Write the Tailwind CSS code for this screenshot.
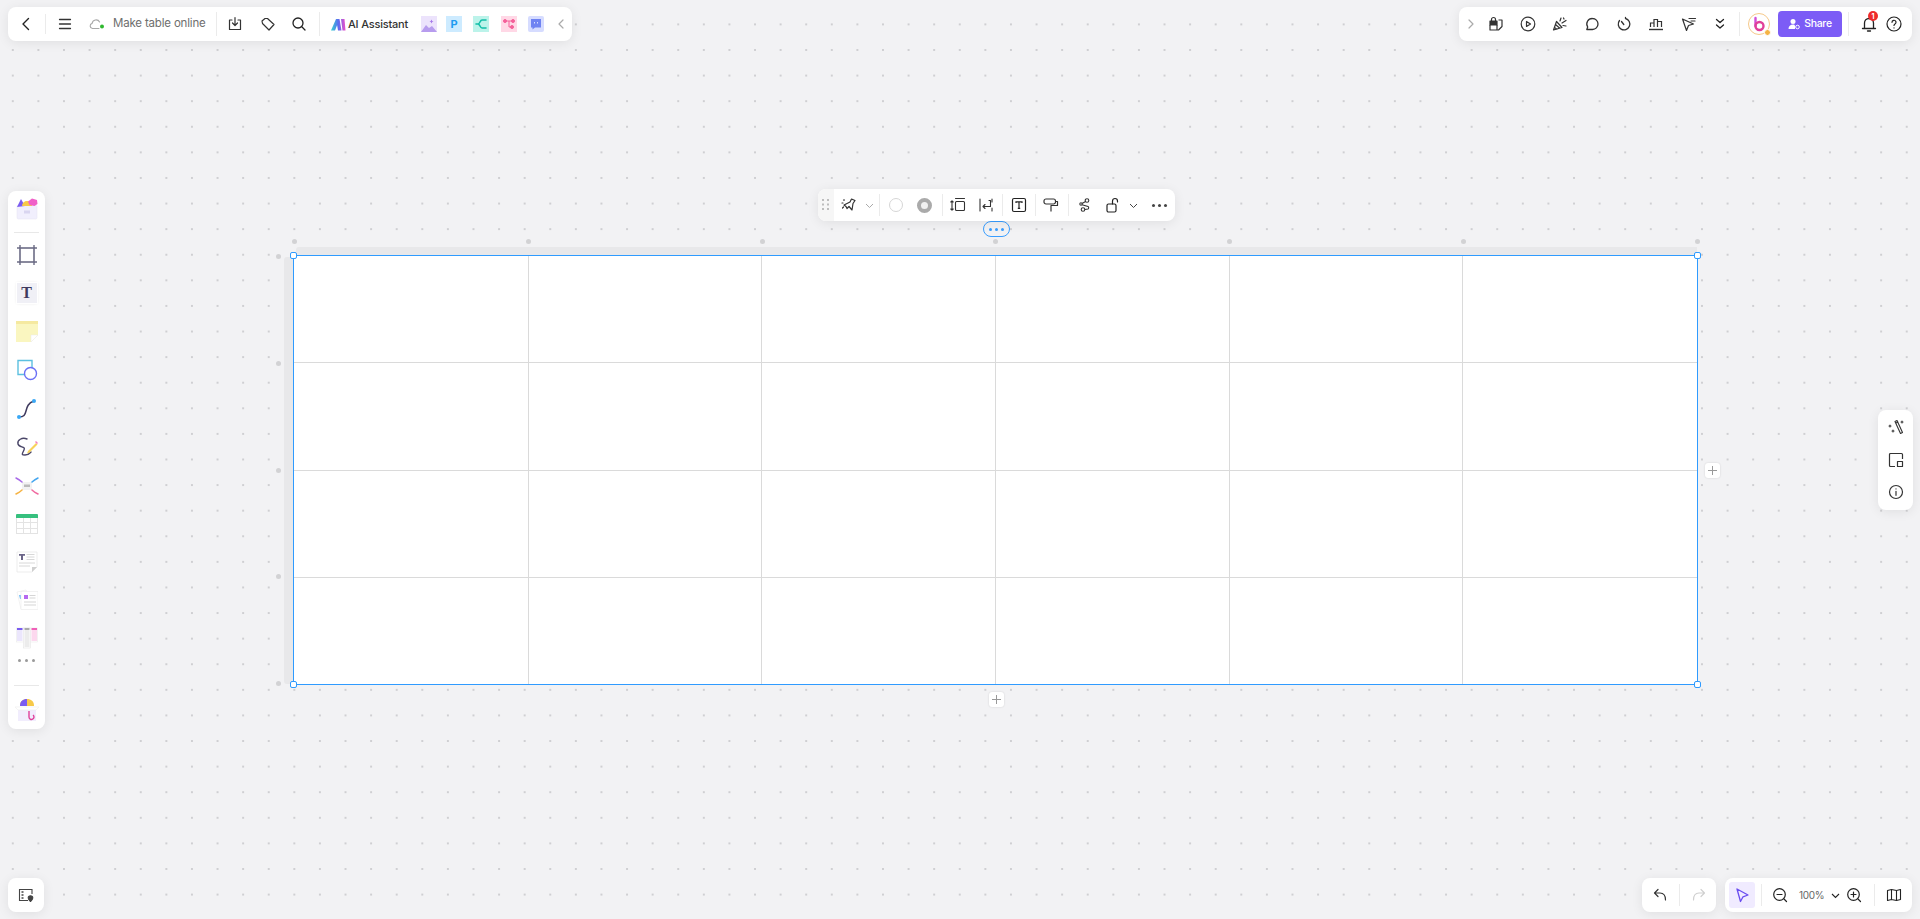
<!DOCTYPE html>
<html lang="en">
<head>
    <meta charset="UTF-8">
    <meta name="viewport" content="width=device-width, initial-scale=1.0">
    <title>Make table online</title>
    <script src="https://cdn.jsdelivr.net/npm/@tailwindcss/browser@4"></script>
</head>
<body class="bg-[#f2f2f4] font-['Inter','Liberation_Sans',sans-serif] overflow-hidden">
<div class="relative w-[1920px] h-[919px] overflow-hidden bg-[radial-gradient(circle,#cfcfd2_1.1px,transparent_1.3px)] bg-size-[25.6px_25.6px] bg-position-[0px_11.6px]">

    <!-- Top left bar -->
    <div class="absolute left-[8px] top-[7px] w-[564px] h-[34px] flex items-center bg-white rounded-lg shadow-[0_2px_12px_rgba(0,0,0,0.08)]">
        <div class="w-[35px] flex justify-center"><svg width="16" height="16" viewBox="0 0 16 16" fill="none" stroke="#222" stroke-width="1.4" stroke-linecap="round" stroke-linejoin="round"><path d="M10.5 2.5 5 8l5.5 5.5"/></svg></div>
        <div class="ml-[2px] w-px h-[20px] bg-[#ebebeb]"></div>
        <div class="w-[38px] flex justify-center"><svg width="16" height="16" viewBox="0 0 16 16" fill="none" stroke="#333" stroke-width="1.3" stroke-linecap="round"><path d="M2.5 3.5h11M2.5 8h11M2.5 12.5h11"/></svg></div>
        <svg class="ml-[5px]" width="16" height="16" viewBox="0 0 16 16" fill="none"><path d="M6 12.5H3.5a2.6 2.6 0 0 1-.4-5.1A4 4 0 0 1 10.6 6M6 12.5h4" stroke="#a8a8a8" stroke-width="1.1" stroke-linecap="round"/><circle cx="13" cy="10.5" r="2" fill="#2fb82f"/></svg>
        <span class="ml-[8px] w-[93px] text-[11.5px] tracking-[-0.18px] leading-none text-[#6e6e6e] whitespace-nowrap">Make table online</span>
        <div class="ml-[10px] w-px h-[24px] bg-[#ebebeb]"></div>
        <div class="w-[36px] flex justify-center"><svg width="16" height="16" viewBox="0 0 16 16" fill="none" stroke="#333" stroke-width="1.2" stroke-linecap="round" stroke-linejoin="round"><path d="M5 4H2.500v9.500h11V4H11M8 1.500V9.500M5.500 7 8 9.500 10.500 7"/></svg></div>
        <div class="w-[30px] flex justify-center"><svg width="16" height="16" viewBox="0 0 16 16" fill="none" stroke="#333" stroke-width="1.2" stroke-linejoin="round"><path d="M2 5 5 2.500h2.500L14 8.500 9 14 2.500 7.500z"/></svg></div>
        <div class="w-[32px] flex justify-center"><svg width="16" height="16" viewBox="0 0 16 16" fill="none" stroke="#222" stroke-width="1.3" stroke-linecap="round"><circle cx="7" cy="7" r="5"/><path d="m10.800 10.800 3.200 3.200"/></svg></div>
        <div class="ml-[4px] w-px h-[24px] bg-[#ebebeb]"></div>
        <svg class="ml-[11px]" width="15" height="13" viewBox="0 0 15 13"><defs><linearGradient id="ai" x1="0" y1="0" x2="1" y2="0"><stop offset="0" stop-color="#35d6d0"/><stop offset=".5" stop-color="#5a6cf0"/><stop offset="1" stop-color="#f04fc8"/></linearGradient></defs><path d="M0 12.500 5 1h3.500L4 12.500zM5 1h3.500l2 11.500H7zM10 1h3.500l1 11.500H11.500z" fill="url(#ai)"/></svg>
        <span class="ml-[2px] w-[62px] text-[11px] tracking-[-0.2px] leading-none font-medium text-[#333] whitespace-nowrap">AI Assistant</span>
        <div class="ml-[11px] w-[16px] h-[16px] bg-[#ece3fc] relative overflow-hidden"><svg width="16" height="16" viewBox="0 0 16 16"><path d="M0 16 5 9l3 3 3-2 5 6z" fill="#b79cee"/><path d="M10.500 3.500 11.200 5l1.300.5-1.300.5-.7 1.500L9.800 6l-1.300-.5 1.300-.5z" fill="#a678e8"/></svg></div>
        <div class="ml-[9px] w-[16px] h-[16px] bg-[#cdebff] flex items-center justify-center text-[11px] leading-none font-bold text-[#1f9bf0]">P</div>
        <div class="ml-[11px] w-[16px] h-[16px] bg-[#bcf3ea]"><svg width="16" height="16" viewBox="0 0 16 16" fill="none" stroke="#10bfa8" stroke-width="1.6" stroke-linecap="round"><path d="M13 4H9C7 4 7 8 5 8s-2 0-2 0M5 8c2 0 2 4 4 4h4"/></svg></div>
        <div class="ml-[12px] w-[16px] h-[16px] bg-[#ffd8e6]"><svg width="16" height="16" viewBox="0 0 16 16" fill="none" stroke="#f5609a" stroke-width="1"><path d="M4 5h8M8 5v6h3"/><circle cx="4" cy="5" r="1.500" fill="#f5609a"/><circle cx="12" cy="5" r="1.500" fill="#f5609a"/><circle cx="11" cy="11" r="1.500" fill="#f5609a"/></svg></div>
        <div class="ml-[11px] w-[16px] h-[16px] bg-[#d6dcff] rounded-[2px]"><svg width="16" height="16" viewBox="0 0 16 16"><path d="M3 3h10v8.500H7L4.500 13.500V11.500H3z" fill="#6f83f2"/><path d="M6.500 6v1.500M9.500 6v1.500" stroke="#d6dcff" stroke-width="1"/></svg></div>
        <div class="ml-[9px] w-[16px] flex justify-center"><svg width="12" height="12" viewBox="0 0 12 12" fill="none" stroke="#aaa" stroke-width="1.200" stroke-linecap="round" stroke-linejoin="round"><path d="M8 2 4 6l4 4"/></svg></div>
    </div>

    <!-- Top right bar -->
    <div class="absolute left-[1459px] top-[7px] w-[453px] h-[34px] flex items-center bg-white rounded-lg shadow-[0_2px_12px_rgba(0,0,0,0.08)]">
        <div class="ml-[6px] w-[12px] flex justify-center"><svg width="12" height="12" viewBox="0 0 12 12" fill="none" stroke="#aaa" stroke-width="1.200" stroke-linecap="round" stroke-linejoin="round"><path d="m4 2 4 4-4 4"/></svg></div>
        <div class="ml-[3px] w-[32px] flex justify-center"><svg width="16" height="16" viewBox="0 0 16 16" fill="none" stroke="#333" stroke-width="1.200" stroke-linejoin="round"><rect x="2" y="5" width="7" height="4" fill="#333"/><path d="M2 9v5h7V9M3.500 5V3.500a2 2 0 0 1 4 0V5M10.500 4h3.500v6.500L10.500 14H9"/></svg></div>
        <div class="w-[32px] flex justify-center"><svg width="16" height="16" viewBox="0 0 16 16" fill="none" stroke="#333" stroke-width="1.200" stroke-linejoin="round"><circle cx="8" cy="8" r="6.800"/><path d="M6.500 5.500v5L10.500 8z"/></svg></div>
        <div class="w-[32px] flex justify-center"><svg width="16" height="16" viewBox="0 0 16 16" fill="none" stroke="#333" stroke-width="1.200" stroke-linecap="round" stroke-linejoin="round"><path d="M4.500 5.500 1.500 14 10 11.500zM3.500 8.500l4 3.500M2.500 11.500l2.500 1.700M8 5l1-3M10 7l4-2.500M11 9.500l3 .5M11.500 2l.5 1"/></svg></div>
        <div class="w-[32px] flex justify-center"><svg width="16" height="16" viewBox="0 0 16 16" fill="none" stroke="#333" stroke-width="1.300" stroke-linejoin="round"><path d="M8.500 2.500a5.500 5.500 0 0 1 0 11H2.800l.9-2.500A5.500 5.500 0 0 1 8.500 2.500z"/></svg></div>
        <div class="w-[32px] flex justify-center"><svg width="16" height="16" viewBox="0 0 16 16" fill="none" stroke="#333" stroke-width="1.300" stroke-linecap="round"><path d="M9.500 2.500A5.800 5.800 0 1 1 3.500 4.500M9.500 2.500v-1M7.800 8.500 5.500 5.500"/></svg></div>
        <div class="w-[32px] flex justify-center"><svg width="16" height="16" viewBox="0 0 16 16" fill="none" stroke="#333" stroke-width="1.200"><path d="M2.500 11V7h3.500v4M6 11V3.500h3.500V11M9.500 11V5.500h4V11"/><path d="M1 13.500h14" stroke-width="1.400"/></svg></div>
        <div class="w-[33px] flex justify-center"><svg width="16" height="16" viewBox="0 0 16 16" fill="none" stroke="#333" stroke-width="1.200" stroke-linejoin="round" stroke-linecap="round"><path d="M1.500 3 5.500 14.500l2-5 5-1.500zM8 2.500h6.500M10 5h4"/></svg></div>
        <div class="w-[30px] flex justify-center"><svg width="14" height="14" viewBox="0 0 14 14" fill="none" stroke="#222" stroke-width="1.300" stroke-linecap="round" stroke-linejoin="round"><path d="m3.500 2.500 3.500 3 3.500-3M3.500 8l3.500 3 3.500-3"/></svg></div>
        <div class="ml-[4px] w-px h-[24px] bg-[#ebebeb]"></div>
        <div class="relative ml-[8px] w-[22px] h-[22px] rounded-full bg-white border border-[#f6c98a] flex items-center justify-center">
            <svg width="14" height="16" viewBox="0 0 14 16" fill="none" stroke-width="2.400" stroke-linecap="round"><path d="M3.500 2v8" stroke="#d14fd8"/><circle cx="7.500" cy="10" r="4" stroke="#e0409a"/></svg>
            <span class="absolute right-[-2px] bottom-[-2px] w-[7px] h-[7px] rounded-full bg-[#f5b344] border border-white"></span>
        </div>
        <div class="ml-[8px] w-[64px] h-[26px] rounded-[4px] bg-[#7c5cf6] flex items-center justify-center gap-[4px]">
            <svg width="12" height="12" viewBox="0 0 12 12" fill="#fff"><circle cx="5" cy="3.500" r="2.500"/><path d="M0.500 11c0-3 2-4.500 4.500-4.500S7 8 7 11z"/><circle cx="9.500" cy="9" r="1.800" fill="none" stroke="#fff" stroke-width="1"/></svg>
            <span class="text-[10.5px] tracking-[-0.3px] leading-none font-medium text-white">Share</span>
        </div>
        <div class="ml-[6px] w-px h-[24px] bg-[#ebebeb]"></div>
        <div class="relative ml-[12px] w-[16px] h-[16px]">
            <svg width="16" height="16" viewBox="0 0 16 16" fill="none" stroke="#222" stroke-width="1.300" stroke-linecap="round" stroke-linejoin="round"><path d="M3.500 12V7a4.500 4.500 0 0 1 9 0v5M1.500 12.500h13M6.500 15h3"/></svg>
            <span class="absolute left-[7px] top-[-5px] w-[10px] h-[10px] rounded-full bg-[#ee2b2b] flex items-center justify-center text-[7px] leading-none font-bold text-white">1</span>
        </div>
        <svg class="ml-[9px]" width="16" height="16" viewBox="0 0 16 16" fill="none" stroke="#222" stroke-width="1.200" stroke-linecap="round"><circle cx="8" cy="8" r="7"/><path d="M6 6.300a2 2 0 1 1 3 1.700c-.7.400-1 .8-1 1.500M8 11.800v.2"/></svg>
    </div>

    <!-- Left tools -->
    <div class="absolute left-[8px] top-[191px] w-[37px] h-[538px] flex flex-col items-center bg-white rounded-lg shadow-[0_2px_12px_rgba(0,0,0,0.08)]">
        <svg class="mt-[7px] shrink-0" width="22" height="22" viewBox="0 0 22 22"><rect x="1" y="7" width="20" height="14" rx="1.500" fill="#f1effd" stroke="#e5e3f2" stroke-width=".5"/><path d="M1 9 5 1l4 7z" fill="#7b5cf0"/><path d="M6 8a5 5 0 0 1 10 0z" fill="#f7c948"/><path d="M12 3.500 16 0.500l5 1.500.5 4-3 2-5-1z" fill="#f060c8"/><rect x="8" y="12.500" width="6" height="3" fill="#d9d5f0"/></svg>
        <div class="mt-[12px] w-[25px] h-px bg-[#e8e8e8]"></div>
        <svg class="mt-[11px] shrink-0" width="22" height="22" viewBox="0 0 22 22" fill="none" stroke="#6c6c85" stroke-width="1.400"><rect x="4" y="4" width="14" height="14" stroke-width="1.600"/><path d="M1 4h3M18 4h3M1 18h3M18 18h3M4 1v3M18 1v3M4 18v3M18 18v3"/></svg>
        <div class="mt-[17px] relative w-[20px] h-[20px] bg-[#f0f0f6] flex items-center justify-center text-[16px] leading-none font-bold font-['Liberation_Serif',serif] text-[#3f3a5e] shadow-[0_0_0_1px_#fff,0_0_3px_rgba(0,0,0,0.15)]">T</div>
        <svg class="mt-[17px] shrink-0" width="22" height="22" viewBox="0 0 22 22"><path d="M0 1h22v14l-7 7H0z" fill="#faf6c0"/><rect width="22" height="3" y="1" fill="#f5e9a0"/><path d="M15 22v-7h7z" fill="#fff" stroke="#e8e8e8" stroke-width=".5"/></svg>
        <svg class="mt-[17px] shrink-0" width="22" height="22" viewBox="0 0 22 22" fill="none"><path d="M2 1.500h14v14H2z" fill="#fff" stroke="#5cc0e0" stroke-width="1.400"/><circle cx="14.500" cy="14.500" r="6" fill="#fff" stroke="#6a70f5" stroke-width="1.400"/></svg>
        <svg class="mt-[17px] shrink-0" width="22" height="22" viewBox="0 0 22 22" fill="none"><path d="M3 19c5 0 6-2 7-6s2-8 8-10" stroke="#3f3a5e" stroke-width="1.500"/><circle cx="3" cy="19" r="2" fill="#3aa8f5"/><circle cx="18" cy="3" r="2" fill="#3aa8f5"/></svg>
        <svg class="mt-[16px] shrink-0" width="22" height="22" viewBox="0 0 22 22" fill="none"><path d="M11 3C6 1 1 4 2 8s8 2 6 6-3 5 1 5 5-2 6-3" stroke="#4a4668" stroke-width="1.400" stroke-linecap="round"/><path d="m12 15 8-8 1.500 1.500-8 8-2.500 1z" fill="#f7d25a"/><path d="m19 6 1-1 2 2-1 1z" fill="#f57fc0"/></svg>
        <svg class="mt-[18px] shrink-0" width="24" height="20" viewBox="0 0 24 20" fill="none" stroke-width="1.500" stroke-linecap="round"><rect x="7" y="6" width="10" height="8" fill="#f2f2f2"/><rect x="9" y="8.500" width="6" height="2.500" fill="#bbb"/><path d="M7 6C5 4 3 3 1 2" stroke="#a86ae8"/><path d="M17 6c2-2 4-3 6-4" stroke="#45a6ef"/><path d="M7 14c-2 2-4 3-6 4" stroke="#f5b344"/><path d="M17 14c2 2 4 3 6 4" stroke="#f06aa0"/></svg>
        <div class="mt-[18px] w-[22px] h-[20px] grid grid-cols-3 grid-rows-3 gap-px p-px pt-0 bg-[#e3e3e3] border-t-[4px] border-[#36c07e] rounded-t-[1px]">
            <span class="bg-white"></span><span class="bg-white"></span><span class="bg-white"></span>
            <span class="bg-white"></span><span class="bg-white"></span><span class="bg-white"></span>
            <span class="bg-white"></span><span class="bg-white"></span><span class="bg-white"></span>
        </div>
        <svg class="mt-[17px] shrink-0" width="22" height="22" viewBox="0 0 22 22"><path d="M1 1h20v15l-5 5H1z" fill="#fff" stroke="#e8e8e8" stroke-width=".8"/><path d="M3 3h6v1.800H7V9H5V4.800H3z" fill="#6b6588"/><path d="M10.500 3.500h8M10.500 6h8M10.500 8.500h8M3 12h16M3 15h11" stroke="#d8d8d8" stroke-width="1"/><path d="M16 21v-5h5z" fill="#cfcfcf"/></svg>
        <svg class="mt-[16px] shrink-0" width="22" height="22" viewBox="0 0 22 22"><path d="M1 3 10 1l2 4v14L5 20z" fill="#fff" stroke="#eaeaea" stroke-width=".6"/><path d="M3 6h2v4H4z" fill="#72bdf5"/><rect x="5" y="2.500" width="17" height="18" fill="#fff" stroke="#eaeaea" stroke-width=".6"/><rect x="8" y="6" width="4" height="4" fill="#b66af0"/><path d="M13.500 6.500h6M13.500 9h6M8 13h12M8 16h12" stroke="#d5d5d5" stroke-width="1"/></svg>
        <svg class="mt-[16px] shrink-0" width="22" height="22" viewBox="0 0 22 22"><rect x="0.500" y="1" width="21" height="14" fill="#fff" stroke="#eaeaea" stroke-width=".6"/><rect x="1" y="2" width="5.500" height="12" fill="#ebe6fc"/><rect x="15.500" y="2" width="5.500" height="12" fill="#fcd8ee"/><rect x="1" y="1" width="5.500" height="2" fill="#7b5cf0"/><rect x="15.500" y="1" width="5.500" height="2" fill="#f060b8"/><rect x="7.500" y="1" width="7" height="20" fill="#fff" stroke="#e5e5e5" stroke-width=".6"/><rect x="8.500" y="1" width="5" height="2" fill="#aaa"/><rect x="8.500" y="3" width="5" height="17" fill="#ececec"/></svg>
        <div class="mt-[10px] flex gap-[4px]"><span class="w-[3px] h-[3px] rounded-full bg-[#9a9a9a]"></span><span class="w-[3px] h-[3px] rounded-full bg-[#9a9a9a]"></span><span class="w-[3px] h-[3px] rounded-full bg-[#9a9a9a]"></span></div>
        <div class="mt-[23px] w-[25px] h-px bg-[#e8e8e8]"></div>
        <svg class="mt-[12px] shrink-0" width="26" height="24" viewBox="0 0 26 24"><path d="M6 8C6 3 9 1 13 1s7 2 7 7z" fill="#f7c948"/><path d="M6 8C6 3 9 1 13 1v7z" fill="#7b5cf0"/><path d="M4 9h18v14H4z" fill="#f1edfd"/><path d="M1 9h24l-3 3H4z" fill="#fff" stroke="#ececec" stroke-width=".6"/><path d="M15 13v6M15 19a2.500 2.500 0 1 0 4-2" fill="none" stroke="#e0409a" stroke-width="1.400"/></svg>
    </div>

    <!-- Table selection -->
    <div class="absolute left-[292px] top-[238.500px] w-[1408px] flex justify-between">
        <span class="w-[5px] h-[5px] rounded-full bg-[#d2d2d4]"></span><span class="w-[5px] h-[5px] rounded-full bg-[#d2d2d4]"></span><span class="w-[5px] h-[5px] rounded-full bg-[#d2d2d4]"></span><span class="w-[5px] h-[5px] rounded-full bg-[#d2d2d4]"></span><span class="w-[5px] h-[5px] rounded-full bg-[#d2d2d4]"></span><span class="w-[5px] h-[5px] rounded-full bg-[#d2d2d4]"></span><span class="w-[5px] h-[5px] rounded-full bg-[#d2d2d4]"></span>
    </div>
    <div class="absolute left-[276px] top-[254px] h-[432px] flex flex-col justify-between">
        <span class="w-[5px] h-[5px] rounded-full bg-[#d2d2d4]"></span><span class="w-[5px] h-[5px] rounded-full bg-[#d2d2d4]"></span><span class="w-[5px] h-[5px] rounded-full bg-[#d2d2d4]"></span><span class="w-[5px] h-[5px] rounded-full bg-[#d2d2d4]"></span><span class="w-[5px] h-[5px] rounded-full bg-[#d2d2d4]"></span>
    </div>
    <div class="absolute left-[296px] top-[247px] w-[1401px] h-[8px] bg-[#e8e8ea] rounded-tl-[3px]"></div>
    <div class="absolute left-[284px] top-[257px] w-[9px] h-[427px] bg-[#e8e8ea] rounded-l-[3px]"></div>

    <div class="absolute left-[293px] top-[255px] w-[1405px] h-[430px] grid grid-cols-[234.5px_233.5px_233.5px_234px_233.5px_1fr] grid-rows-[106.5px_108px_107px_1fr] bg-white border-[1.500px] border-[#2f9bff]">
        <div class="border-r border-b border-[#dadada]"></div><div class="border-r border-b border-[#dadada]"></div><div class="border-r border-b border-[#dadada]"></div><div class="border-r border-b border-[#dadada]"></div><div class="border-r border-b border-[#dadada]"></div><div class="border-b border-[#dadada]"></div>
        <div class="border-r border-b border-[#dadada]"></div><div class="border-r border-b border-[#dadada]"></div><div class="border-r border-b border-[#dadada]"></div><div class="border-r border-b border-[#dadada]"></div><div class="border-r border-b border-[#dadada]"></div><div class="border-b border-[#dadada]"></div>
        <div class="border-r border-b border-[#dadada]"></div><div class="border-r border-b border-[#dadada]"></div><div class="border-r border-b border-[#dadada]"></div><div class="border-r border-b border-[#dadada]"></div><div class="border-r border-b border-[#dadada]"></div><div class="border-b border-[#dadada]"></div>
        <div class="border-r border-[#dadada]"></div><div class="border-r border-[#dadada]"></div><div class="border-r border-[#dadada]"></div><div class="border-r border-[#dadada]"></div><div class="border-r border-[#dadada]"></div><div></div>
    </div>
    <span class="absolute left-[290px] top-[252px] w-[7px] h-[7px] rounded-[2px] bg-white border border-[#2f9bff]"></span>
    <span class="absolute left-[1694px] top-[252px] w-[7px] h-[7px] rounded-[2px] bg-white border border-[#2f9bff]"></span>
    <span class="absolute left-[290px] top-[681px] w-[7px] h-[7px] rounded-[2px] bg-white border border-[#2f9bff]"></span>
    <span class="absolute left-[1694px] top-[681px] w-[7px] h-[7px] rounded-[2px] bg-white border border-[#2f9bff]"></span>

    <!-- Add row / column -->
    <div class="absolute left-[1705px] top-[463px] w-[15px] h-[15px] rounded-[3px] bg-white flex items-center justify-center shadow-[0_0_2px_rgba(0,0,0,0.15)]"><svg width="11" height="11" viewBox="0 0 11 11" stroke="#999" stroke-width="1"><path d="M5.500 1v9M1 5.500h9"/></svg></div>
    <div class="absolute left-[989px] top-[692px] w-[15px] h-[15px] rounded-[3px] bg-white flex items-center justify-center shadow-[0_0_2px_rgba(0,0,0,0.15)]"><svg width="11" height="11" viewBox="0 0 11 11" stroke="#999" stroke-width="1"><path d="M5.500 1v9M1 5.500h9"/></svg></div>

    <!-- More pill under the toolbar -->
    <div class="absolute left-[983px] top-[221px] w-[27px] h-[16px] rounded-full bg-[#f2f2f4] border border-[#3a9eff] flex items-center justify-center gap-[3px]">
        <span class="w-[3px] h-[3px] rounded-full bg-[#3a9eff]"></span><span class="w-[3px] h-[3px] rounded-full bg-[#3a9eff]"></span><span class="w-[3px] h-[3px] rounded-full bg-[#3a9eff]"></span>
    </div>

    <!-- Floating table toolbar -->
    <div class="absolute left-[818px] top-[189px] w-[357px] h-[32px] flex items-center bg-white rounded-lg shadow-[0_2px_12px_rgba(0,0,0,0.08)] overflow-hidden">
        <div class="w-[16px] h-full bg-[#f6f6f6] flex items-center justify-center"><svg width="8" height="12" viewBox="0 0 8 12" fill="#bdbdbd"><rect x="0" y="0" width="2" height="2"/><rect x="5" y="0" width="2" height="2"/><rect x="0" y="4.500" width="2" height="2"/><rect x="5" y="4.500" width="2" height="2"/><rect x="0" y="9" width="2" height="2"/><rect x="5" y="9" width="2" height="2"/></svg></div>
        <div class="w-[30px] flex justify-center"><svg width="16" height="16" viewBox="0 0 16 16" fill="none" stroke="#333" stroke-width="1.200" stroke-linejoin="round" stroke-linecap="round"><path d="M3 8 9 5l1.500-3L14 3.500l-2 3-1 6.500-3-3.500-2 2-1-2zM1 6h1M3 2.500v1M1.500 11l1-1"/></svg></div>
        <div class="w-[10px] flex justify-center"><svg width="9" height="9" viewBox="0 0 9 9" fill="none" stroke="#aaa" stroke-width="1"><path d="m1 3 3.500 3.500L8 3"/></svg></div>
        <div class="ml-[5px] w-px h-[22px] bg-[#ebebeb]"></div>
        <div class="ml-[9px] w-[14px] h-[14px] rounded-full bg-white border border-[#d5d5d5]"></div>
        <div class="ml-[14px] w-[15px] h-[15px] rounded-full border-[4px] border-[#aaaaaa] bg-[#f0f0f0]"></div>
        <div class="ml-[10px] w-px h-[22px] bg-[#ebebeb]"></div>
        <div class="ml-[7px] w-[16px] flex justify-center"><svg width="16" height="16" viewBox="0 0 16 16" fill="none" stroke="#333" stroke-width="1.100" stroke-linecap="round" stroke-linejoin="round"><rect x="5.500" y="4.500" width="9" height="9" rx="1"/><path d="M5.500 1.500h9M2 4v9M.8 5 2 3.800 3.200 5M.8 12 2 13.200 3.200 12"/></svg></div>
        <div class="ml-[12px] w-[16px] flex justify-center"><svg width="16" height="16" viewBox="0 0 16 16" fill="none" stroke="#333" stroke-width="1.100" stroke-linecap="round" stroke-linejoin="round"><path d="M2 2v12M14 2v3M14 11v3M11 3.500h1.500v6H5M7 7.500 5 9.500l2 2"/></svg></div>
        <div class="ml-[8px] w-px h-[22px] bg-[#ebebeb]"></div>
        <div class="ml-[8px] w-[16px] flex justify-center"><svg width="16" height="16" viewBox="0 0 16 16" fill="none" stroke="#222" stroke-width="1.200"><rect x="1.500" y="1.500" width="13" height="13" rx="1.500"/><path d="M5 6V4.800h6V6M8 4.800v6.500M6.800 11.300h2.400"/></svg></div>
        <div class="ml-[8px] w-px h-[22px] bg-[#ebebeb]"></div>
        <div class="ml-[7px] w-[16px] flex justify-center"><svg width="16" height="16" viewBox="0 0 16 16" fill="none" stroke="#333" stroke-width="1.200" stroke-linejoin="round"><rect x="1" y="2" width="11.500" height="5" rx="2"/><path d="M12.500 4.500h2v4H8v3M8 11.500v3"/></svg></div>
        <div class="ml-[9px] w-px h-[22px] bg-[#ebebeb]"></div>
        <div class="ml-[8px] w-[16px] flex justify-center"><svg width="16" height="16" viewBox="0 0 16 16" fill="none" stroke="#333" stroke-width="1.100"><circle cx="10" cy="3.500" r="1.800"/><circle cx="6" cy="12.500" r="1.800"/><circle cx="4" cy="7" r="1.200"/><path d="M8.500 4.500 5 6.500M5 7.800l6 1.700a1.500 1.500 0 0 1 0 2.500L7.800 12.500"/></svg></div>
        <div class="ml-[12px] w-[16px] flex justify-center"><svg width="16" height="16" viewBox="0 0 16 16" fill="none" stroke="#222" stroke-width="1.200" stroke-linecap="round"><rect x="2" y="7" width="9" height="8" rx="1.500"/><path d="M7.500 7V4a2.500 2.500 0 0 1 5 0v1"/></svg></div>
        <div class="ml-[7px] w-[10px] flex justify-center"><svg width="9" height="9" viewBox="0 0 9 9" fill="none" stroke="#444" stroke-width="1"><path d="m1 3 3.500 3.500L8 3"/></svg></div>
        <div class="ml-[14px] flex gap-[3px]"><span class="w-[3px] h-[3px] rounded-full bg-[#444]"></span><span class="w-[3px] h-[3px] rounded-full bg-[#444]"></span><span class="w-[3px] h-[3px] rounded-full bg-[#444]"></span></div>
    </div>

    <!-- Right tools -->
    <div class="absolute left-[1878px] top-[410px] w-[35px] h-[100px] flex flex-col items-center justify-center gap-[16px] bg-white rounded-lg shadow-[0_2px_12px_rgba(0,0,0,0.08)]">
        <svg width="16" height="16" viewBox="0 0 16 16" fill="none" stroke="#333" stroke-width="1.100" stroke-linecap="round" stroke-linejoin="round"><path d="m7 1.500 2-1 5.500 12-2 1zM8 3l2-1M1 6h2M2 5v2M13 2h2M14 1v2M4 11h2M5 10v2"/></svg>
        <svg width="16" height="16" viewBox="0 0 16 16" fill="none" stroke="#333" stroke-width="1.200" stroke-linejoin="round"><path d="M7 14.500H2.500a1 1 0 0 1-1-1v-11a1 1 0 0 1 1-1h11a1 1 0 0 1 1 1V7"/><rect x="9.500" y="9.500" width="5" height="5"/></svg>
        <svg width="16" height="16" viewBox="0 0 16 16" fill="none" stroke="#333" stroke-width="1.200" stroke-linecap="round"><circle cx="8" cy="8" r="6.500"/><path d="M8 7.300v4M8 4.800v.2"/></svg>
    </div>

    <!-- Bottom left -->
    <div class="absolute left-[8px] top-[878px] w-[36px] h-[34px] flex items-center justify-center bg-white rounded-lg shadow-[0_2px_12px_rgba(0,0,0,0.08)]">
        <svg width="16" height="14" viewBox="0 0 16 14" fill="none" stroke="#444" stroke-width="1.100"><path d="M10 12.500H1.500v-11h12.500V6"/><path d="M3.500 4h2M3.500 7h2M3.500 10h2" stroke-width="1.400"/><path d="M12.500 13.500c-1.500-1.500-2.300-2.500-2.300-3.500a2.300 2.300 0 0 1 4.600 0c0 1-.8 2-2.300 3.500z" fill="#444"/></svg>
    </div>

    <!-- Undo / redo -->
    <div class="absolute left-[1642px] top-[878px] w-[74px] h-[34px] flex items-center bg-white rounded-lg shadow-[0_2px_12px_rgba(0,0,0,0.08)]">
        <div class="ml-[10px] w-[16px] flex justify-center"><svg width="14" height="14" viewBox="0 0 14 14" fill="none" stroke="#333" stroke-width="1.200" stroke-linecap="round" stroke-linejoin="round"><path d="M5 1.500 1.500 5 5 8.500M1.500 5H7c3.500 0 5.500 2.500 5.500 7"/></svg></div>
        <div class="ml-[11px] w-px h-[22px] bg-[#ebebeb]"></div>
        <div class="ml-[11px] w-[16px] flex justify-center"><svg width="14" height="14" viewBox="0 0 14 14" fill="none" stroke="#d0d0d0" stroke-width="1.200" stroke-linecap="round" stroke-linejoin="round"><path d="M9 1.500 12.500 5 9 8.500M12.500 5H7C3.500 5 1.500 7.500 1.500 12"/></svg></div>
    </div>

    <!-- Zoom controls -->
    <div class="absolute left-[1725px] top-[878px] w-[187px] h-[34px] flex items-center bg-white rounded-lg shadow-[0_2px_12px_rgba(0,0,0,0.08)]">
        <div class="ml-[4px] w-[26px] h-[26px] rounded-[3px] bg-[#f0ebff] flex items-center justify-center"><svg width="16" height="16" viewBox="0 0 16 16" fill="none" stroke="#6a4df0" stroke-width="1.300" stroke-linejoin="round"><path d="M3 2 14 8l-5 1.800L6.500 14.500z"/></svg></div>
        <div class="ml-[6px] w-px h-[22px] bg-[#ebebeb]"></div>
        <svg class="ml-[10px] shrink-0" width="16" height="16" viewBox="0 0 16 16" fill="none" stroke="#222" stroke-width="1.200" stroke-linecap="round"><circle cx="7.500" cy="7.500" r="5.800"/><path d="m12 12 2.500 2.500M5 7.500h5"/></svg>
        <span class="ml-[11px] w-[26px] text-[10px] tracking-[-0.3px] leading-none text-[#666] whitespace-nowrap">100%</span>
        <svg class="ml-[6px] shrink-0" width="9" height="9" viewBox="0 0 9 9" fill="none" stroke="#222" stroke-width="1.100"><path d="m1 3 3.500 3.500L8 3"/></svg>
        <svg class="ml-[6px] shrink-0" width="16" height="16" viewBox="0 0 16 16" fill="none" stroke="#222" stroke-width="1.200" stroke-linecap="round"><circle cx="7.500" cy="7.500" r="5.800"/><path d="m12 12 2.500 2.500M5 7.500h5M7.500 5v5"/></svg>
        <div class="ml-[12px] w-px h-[22px] bg-[#ebebeb]"></div>
        <svg class="ml-[11px] shrink-0" width="16" height="16" viewBox="0 0 16 16" fill="none" stroke="#222" stroke-width="1.100" stroke-linejoin="round"><path d="M1.500 3.500 5.500 2.500l5 1 4-1v10l-4 1-5-1-4 1zM5.500 2.500v10M10.500 3.500v10"/></svg>
    </div>
</div>
</body>
</html>
